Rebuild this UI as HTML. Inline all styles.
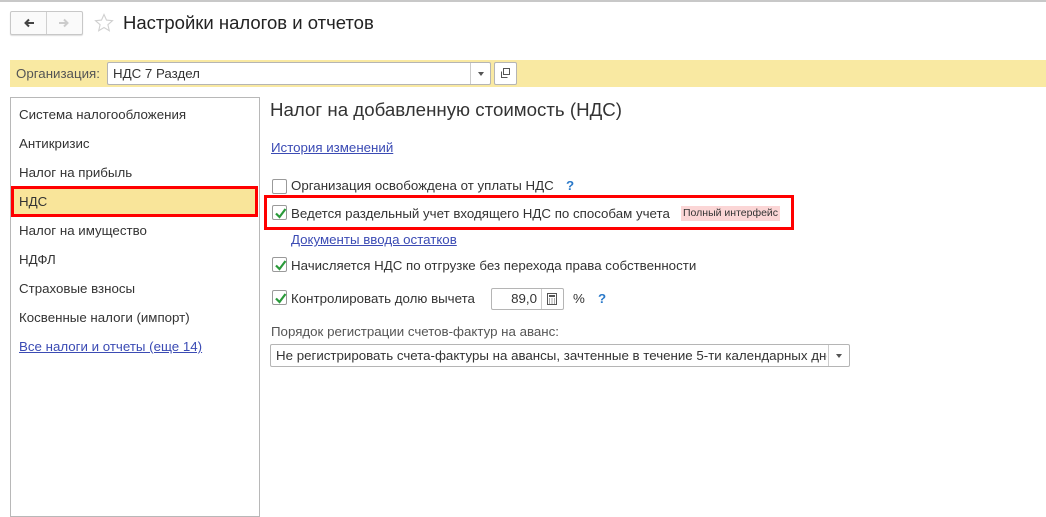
<!DOCTYPE html>
<html><head><meta charset="utf-8"><style>
*{margin:0;padding:0;box-sizing:border-box}
body{width:1046px;height:507px;background:#fff;font-family:"Liberation Sans","Noto Sans CJK SC",sans-serif;font-size:13.3px;color:#333;position:relative;overflow:hidden}
.a{position:absolute;white-space:nowrap}
a,.lnk{color:#3b4bb4;text-decoration:underline}
.cb{position:absolute;width:15px;height:15px;border:1px solid #9a9a9a;border-radius:2px;background:#fff}
.cb svg{position:absolute;left:1px;top:1px}
.q{color:#2a79c9;font-weight:bold}
.tri{position:absolute;width:0;height:0;border-left:3px solid transparent;border-right:3px solid transparent;border-top:4px solid #555}
</style></head><body>
<div class="a" style="left:0;top:0;width:1046px;height:2px;background:#c8c8c8"></div>
<div class="a" style="left:10px;top:11px;width:73px;height:24px;border:1px solid #c8c8c8;border-radius:2px;background:#fafafa;box-shadow:0 1px 1px #ddd"></div>
<div class="a" style="left:46px;top:12px;width:1px;height:22px;background:#d0d0d0"></div>
<svg class="a" style="left:22px;top:17px" width="14" height="12"><path d="M12 6H3.5M7 2.5L3.5 6 7 9.5" stroke="#444" stroke-width="2" fill="none"/></svg>
<svg class="a" style="left:57px;top:17px" width="14" height="12"><path d="M2 6h8.5M7 2.5L10.5 6 7 9.5" stroke="#ccc" stroke-width="2" fill="none"/></svg>
<svg class="a" style="left:94px;top:13px" width="20" height="20"><path d="M10 1.5l2.5 5.6 6 .6-4.6 4 1.4 6-5.3-3.2-5.3 3.2 1.4-6-4.6-4 6-.6z" fill="none" stroke="#d0d0d0" stroke-width="1.1"/></svg>
<div class="a" style="left:123px;top:12px;font-size:18.5px;color:#222">Настройки налогов и отчетов</div>
<div class="a" style="left:10px;top:60px;width:1036px;height:27px;background:#f9e9a2"></div>
<div class="a" style="left:16px;top:66px;color:#555">Организация:</div>
<div class="a" style="left:107px;top:62px;width:384px;height:23px;border:1px solid #b5b5b5;border-radius:2px;background:#fff"></div>
<div class="a" style="left:113px;top:66px;color:#333">НДС 7 Раздел</div>
<div class="a" style="left:470px;top:63px;width:1px;height:21px;background:#ccc"></div>
<div class="tri" style="left:478px;top:72px"></div>
<div class="a" style="left:494px;top:62px;width:23px;height:23px;border:1px solid #b5b5b5;border-radius:2px;background:#fff"></div>
<svg class="a" style="left:499px;top:67px" width="13" height="13"><rect x="4.5" y="1.5" width="6" height="6" fill="none" stroke="#555"/><path d="M2.5 4.5v6h6" fill="none" stroke="#555"/></svg>
<div class="a" style="left:10px;top:97px;width:250px;height:420px;border:1px solid #b8b8b8"></div>
<div class="a" style="left:19px;top:107px">Система налогообложения</div>
<div class="a" style="left:19px;top:136px">Антикризис</div>
<div class="a" style="left:19px;top:165px">Налог на прибыль</div>
<div class="a" style="left:11px;top:186px;width:247px;height:31px;background:#f9e59a;border:3px solid #f00"></div>
<div class="a" style="left:19px;top:194px">НДС</div>
<div class="a" style="left:19px;top:223px">Налог на имущество</div>
<div class="a" style="left:19px;top:252px">НДФЛ</div>
<div class="a" style="left:19px;top:281px">Страховые взносы</div>
<div class="a" style="left:19px;top:310px">Косвенные налоги (импорт)</div>
<div class="a lnk" style="left:19px;top:339px">Все налоги и отчеты (еще 14)</div>
<div class="a" style="left:270px;top:99px;font-size:18.7px;color:#333">Налог на добавленную стоимость (НДС)</div>
<div class="a lnk" style="left:271px;top:140px">История изменений</div>
<div class="cb" style="left:272px;top:179px"></div>
<div class="a" style="left:291px;top:178px">Организация освобождена от уплаты НДС</div>
<div class="a q" style="left:566px;top:178px">?</div>
<div class="a" style="left:264px;top:195px;width:530px;height:35px;border:3px solid #f00"></div>
<div class="cb" style="left:272px;top:205px"><svg width="13" height="13"><path d="M2 6.5l3.5 3.5 6-8" stroke="#2a9a3a" stroke-width="2.2" fill="none"/></svg></div>
<div class="a" style="left:291px;top:206px">Ведется раздельный учет входящего НДС по способам учета</div>
<div class="a" style="left:681px;top:206px;height:15px;padding:1px 2px;background:#fbd6d6;font-size:10.5px;color:#333">Полный интерфейс</div>
<div class="a lnk" style="left:291px;top:232px">Документы ввода остатков</div>
<div class="cb" style="left:272px;top:257px"><svg width="13" height="13"><path d="M2 6.5l3.5 3.5 6-8" stroke="#2a9a3a" stroke-width="2.2" fill="none"/></svg></div>
<div class="a" style="left:291px;top:258px">Начисляется НДС по отгрузке без перехода права собственности</div>
<div class="cb" style="left:272px;top:290px"><svg width="13" height="13"><path d="M2 6.5l3.5 3.5 6-8" stroke="#2a9a3a" stroke-width="2.2" fill="none"/></svg></div>
<div class="a" style="left:291px;top:291px">Контролировать долю вычета</div>
<div class="a" style="left:491px;top:288px;width:73px;height:22px;border:1px solid #b5b5b5;border-radius:2px"></div>
<div class="a" style="left:505px;top:291px;width:32px;text-align:right">89,0</div>
<div class="a" style="left:541px;top:289px;width:1px;height:20px;background:#ccc"></div>
<svg class="a" style="left:546px;top:293px" width="12" height="12"><rect x="1.5" y="0.5" width="9" height="11" fill="none" stroke="#555"/><rect x="3" y="2" width="6" height="2" fill="#555"/><path d="M3 6h1M5.5 6h1M8 6h1M3 8h1M5.5 8h1M8 8h1M3 10h1M5.5 10h1M8 10h1" stroke="#555"/></svg>
<div class="a" style="left:573px;top:291px">%</div>
<div class="a q" style="left:598px;top:291px">?</div>
<div class="a" style="left:271px;top:324px;color:#555">Порядок регистрации счетов-фактур на аванс:</div>
<div class="a" style="left:270px;top:344px;width:580px;height:23px;border:1px solid #b5b5b5;border-radius:2px;overflow:hidden"></div>
<div class="a" style="left:276px;top:348px;width:551px;overflow:hidden">Не регистрировать счета-фактуры на авансы, зачтенные в течение 5-ти календарных дней</div>
<div class="a" style="left:828px;top:345px;width:1px;height:21px;background:#ccc"></div>
<div class="tri" style="left:836px;top:354px"></div>
</body></html>
